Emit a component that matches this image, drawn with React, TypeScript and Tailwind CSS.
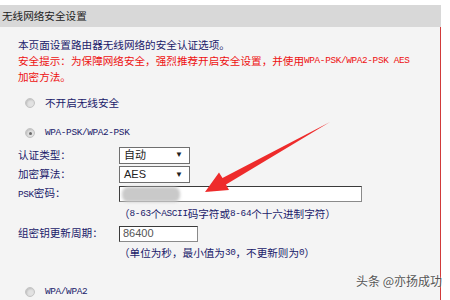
import React from "react";

const cjk = { fontFamily: '"Noto Sans CJK SC", "Noto Sans", sans-serif' };
const mono = { fontFamily: '"Liberation Mono", "DejaVu Sans Mono", monospace' };

function Radio({ checked }: { checked?: boolean }) {
    return (
        <span className="relative inline-block w-[10px] h-[10px] rounded-full border border-[#c4c4c4] bg-[#e2e2e2] shadow-[inset_1px_1px_2px_#bdbdbd]">
            {checked && <span className="absolute left-[2.5px] top-[2.5px] w-[3px] h-[3px] rounded-full bg-[#6a6a6a]" />}
        </span>
    );
}

function Select({ value }: { value: string }) {
    return (
        <div className="w-[71px] h-[17px] bg-white border border-[#6f6f6f] flex items-center justify-between pl-[4px] pr-[6px] text-[11px] text-[#222]" style={{ fontFamily: '"Liberation Sans", "Noto Sans CJK SC", sans-serif' }}>
            <span>{value}</span>
            <span className="text-[8px]">▼</span>
        </div>
    );
}

function M({ children }: { children: React.ReactNode }) {
    return <span className="text-[9.4px] tracking-[-0.35px]" style={mono}>{children}</span>;
}

export default function App() {
    return (
        <div className="relative w-[450px] h-[300px] bg-white overflow-hidden text-[10.6px] leading-none" style={cjk}>
            <div className="mt-[5px] w-[441px] h-[22px] bg-[#d8d8d8] flex items-center pl-[2px] text-[#222]">
                无线网络安全设置
            </div>
            <div className="w-[441px] h-[280px] bg-[#f4f4f4] border-r border-[#d23a3a] pl-[18px] pt-[10px]">
                <div className="h-[16px] flex items-center text-[#1a1a6a]">本页面设置路由器无线网络的安全认证选项。</div>
                <div className="h-[16px] flex items-center text-[#ee1111] whitespace-nowrap">
                    <span>安全提示：为保障网络安全，强烈推荐开启安全设置，并使用</span><M>WPA-PSK/WPA2-PSK AES</M>
                </div>
                <div className="h-[16px] flex items-center text-[#ee1111]">加密方法。</div>

                <div className="mt-[8px] h-[20px] flex items-center text-[#1a1a6a]">
                    <span className="ml-[7px] mr-[10px] flex"><Radio /></span>
                    不开启无线安全
                </div>

                <div className="mt-[10px] h-[20px] flex items-center text-[#1a1a6a]">
                    <span className="ml-[7px] mr-[10px] flex"><Radio checked /></span>
                    <M>WPA-PSK/WPA2-PSK</M>
                </div>

                <div className="mt-[2px] h-[20px] flex items-center text-[#1a1a6a]">
                    <span className="w-[101px]">认证类型：</span>
                    <Select value="自动" />
                </div>
                <div className="h-[19px] flex items-center text-[#1a1a6a]">
                    <span className="w-[101px]">加密算法：</span>
                    <Select value="AES" />
                </div>
                <div className="h-[19px] flex items-center text-[#1a1a6a]">
                    <span className="w-[101px]"><M>PSK</M>密码：</span>
                    <div className="relative w-[243px] h-[16px] bg-white border border-[#8a8a8a] border-t-[#3a3a3a] border-l-[#3a3a3a]">
                        <div className="absolute left-[2px] top-[0px] w-[58px] h-[15px] rounded-[6px] bg-[#c9c9c9] blur-[1.5px]" />
                    </div>
                </div>
                <div className="mt-[1px] h-[20px] flex items-center pl-[101px] text-[#1a1a6a]">
                    <span>（</span><M>8-63</M><span>个</span><M>ASCII</M><span>码字符或</span><M>8-64</M><span>个十六进制字符）</span>
                </div>
                <div className="h-[19px] flex items-center text-[#1a1a6a]">
                    <span className="w-[101px]">组密钥更新周期：</span>
                    <div className="w-[79px] h-[16px] bg-white border border-[#8a8a8a] border-t-[#3a3a3a] border-l-[#3a3a3a] flex items-center pl-[3px] text-[11px] text-[#555]" style={{ fontFamily: '"Liberation Sans", sans-serif' }}>
                        86400
                    </div>
                </div>
                <div className="h-[20px] flex items-center pl-[101px] text-[#1a1a6a]">
                    <span>（单位为秒，最小值为</span><M>30</M><span>，不更新则为</span><M>0</M><span>）</span>
                </div>

                <div className="mt-[19px] h-[20px] flex items-center text-[#1a1a6a]">
                    <span className="ml-[7px] mr-[10px] flex"><Radio /></span>
                    <M>WPA/WPA2</M>
                </div>
            </div>

            <svg className="absolute left-0 top-0" width="450" height="300" viewBox="0 0 450 300">
                <polygon points="205,192 219,172.5 222.5,178 330,122 226,184.5 229,190" fill="#ee2b2b" />
            </svg>

            <div className="absolute left-[356px] top-[275px] text-[12px] text-[#555] [text-shadow:0_0_2px_#fff]" style={cjk}>
                头条 @亦扬成功
            </div>
        </div>
    );
}
